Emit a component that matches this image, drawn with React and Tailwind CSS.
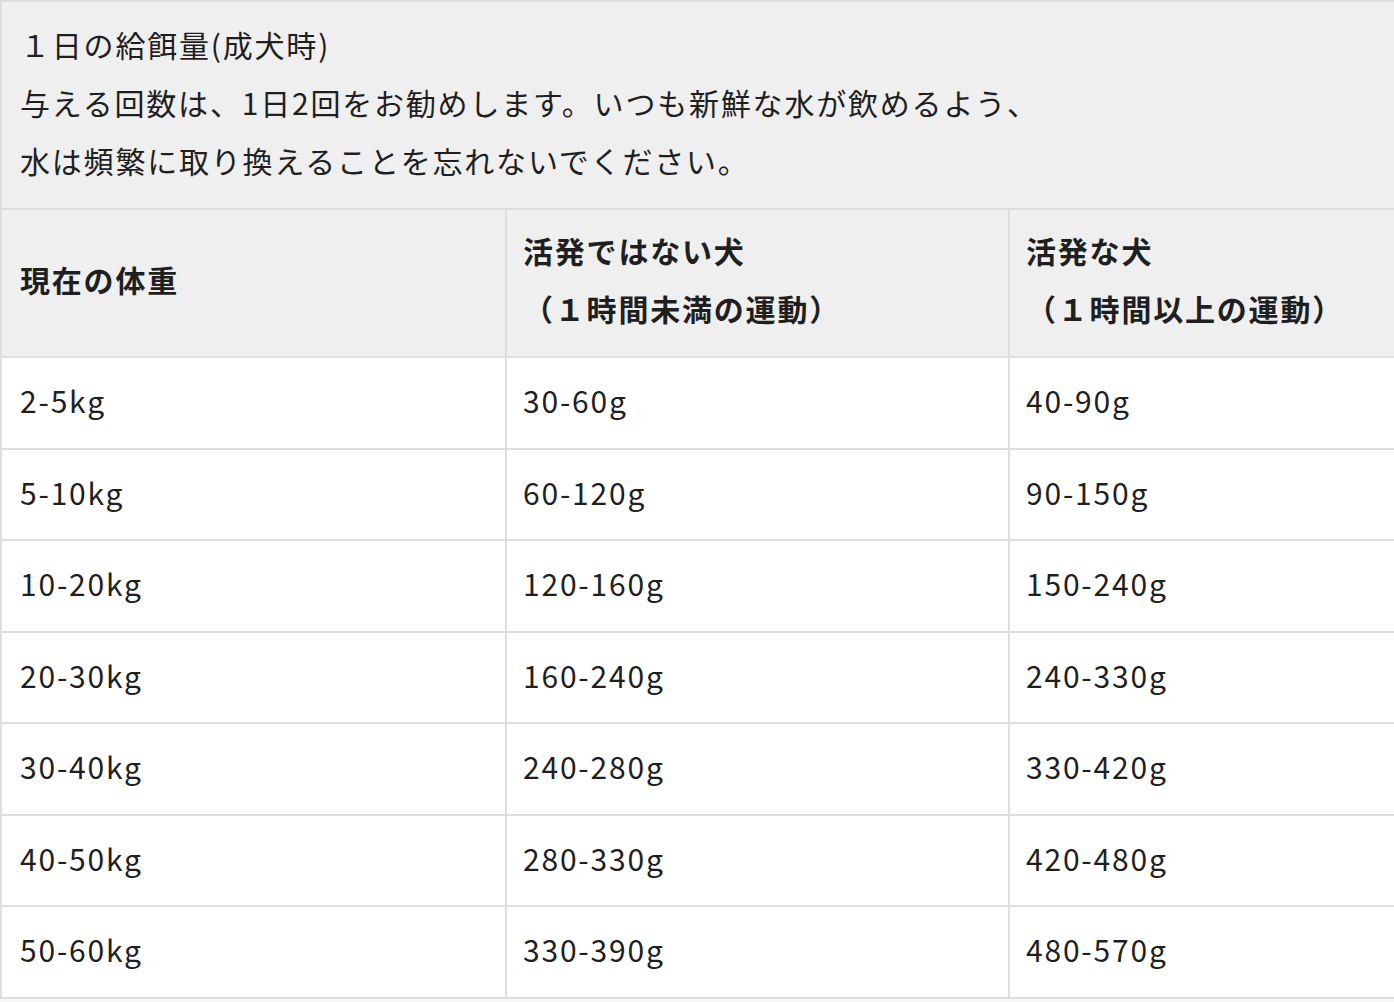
import React from "react";

const rows = [
  ["2-5kg", "30-60g", "40-90g"],
  ["5-10kg", "60-120g", "90-150g"],
  ["10-20kg", "120-160g", "150-240g"],
  ["20-30kg", "160-240g", "240-330g"],
  ["30-40kg", "240-280g", "330-420g"],
  ["40-50kg", "280-330g", "420-480g"],
  ["50-60kg", "330-390g", "480-570g"],
];

export default function App() {
  return (
    <div
      className="w-[1394px] h-[1002px] overflow-hidden bg-[#f7f7f4] text-[#1f1f1f]"
      style={{ fontFamily: '"Noto Sans CJK JP", "Noto Sans", sans-serif' }}
    >
      <div className="w-[1400px] border-2 border-[#dedede] text-[30px] leading-[58px] tracking-[1.8px]">
        <div className="bg-[#efefef] px-[18px] pt-[13px] pb-[19px]">
          <div>１日の給餌量(成犬時)</div>
          <div>与える回数は、1日2回をお勧めします。いつも新鮮な水が飲めるよう、</div>
          <div>水は頻繁に取り換えることを忘れないでください。</div>
        </div>
        <div className="grid grid-cols-[503px_503px_1fr] border-t-2 border-[#dedede] bg-[#efefef] font-bold">
          <div className="flex items-center px-[18px] pt-[11px] pb-[19px]">現在の体重</div>
          <div className="border-l-2 border-[#dedede] px-[16px] pt-[11px] pb-[19px]">
            <div>活発ではない犬</div>
            <div>（１時間未満の運動）</div>
          </div>
          <div className="border-l-2 border-[#dedede] px-[16px] pt-[11px] pb-[19px]">
            <div>活発な犬</div>
            <div>（１時間以上の運動）</div>
          </div>
        </div>
        {rows.map((r, i) => (
          <div
            key={i}
            className="grid grid-cols-[503px_503px_1fr] border-t-2 border-[#dedede] bg-white"
          >
            <div className="px-[18px] pt-[13px] pb-[18.5px]">{r[0]}</div>
            <div className="border-l-2 border-[#dedede] px-[16px] pt-[13px] pb-[18.5px]">{r[1]}</div>
            <div className="border-l-2 border-[#dedede] px-[16px] pt-[13px] pb-[18.5px]">{r[2]}</div>
          </div>
        ))}
      </div>
    </div>
  );
}
